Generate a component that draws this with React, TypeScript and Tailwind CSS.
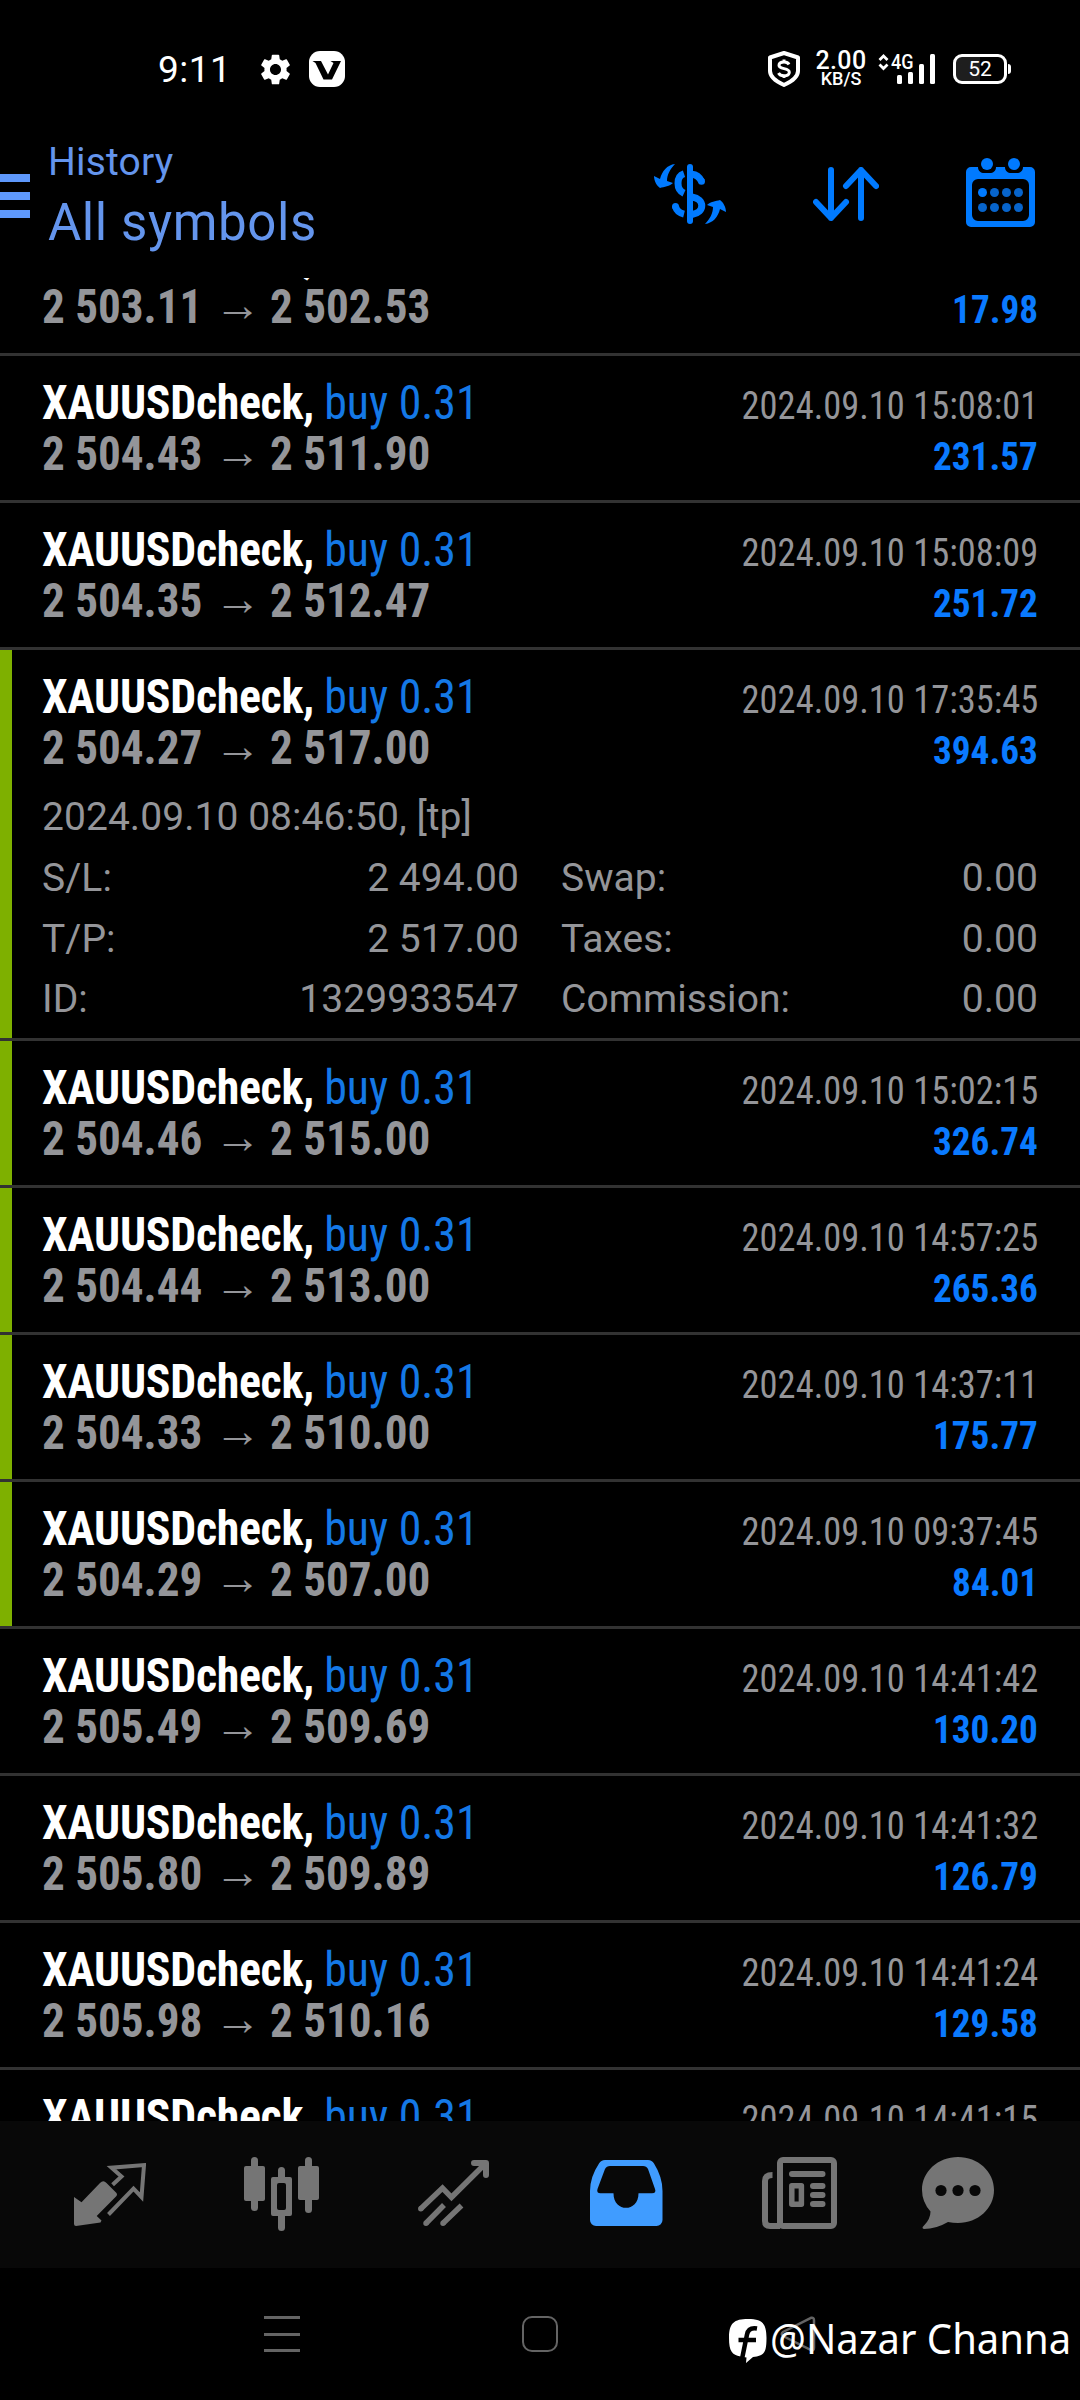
import type { ReactNode } from 'react';
import { MdSettings } from 'react-icons/md';

interface Deal {
  side: 'buy' | 'sell';
  open: string;
  close: string;
  time: string;
  profit: string;
  marked?: boolean;
  details?: DealDetails;
}

interface DealDetails {
  opened: string;
  left: [string, string][];
  right: [string, string][];
}

const DEALS: Deal[] = [
  { side: 'sell', open: '2 503.11', close: '2 502.53', time: '2024.09.10 15:07:52', profit: '17.98' },
  { side: 'buy', open: '2 504.43', close: '2 511.90', time: '2024.09.10 15:08:01', profit: '231.57' },
  { side: 'buy', open: '2 504.35', close: '2 512.47', time: '2024.09.10 15:08:09', profit: '251.72' },
  {
    side: 'buy',
    open: '2 504.27',
    close: '2 517.00',
    time: '2024.09.10 17:35:45',
    profit: '394.63',
    marked: true,
    details: {
      opened: '2024.09.10 08:46:50, [tp]',
      left: [
        ['S/L:', '2 494.00'],
        ['T/P:', '2 517.00'],
        ['ID:', '1329933547'],
      ],
      right: [
        ['Swap:', '0.00'],
        ['Taxes:', '0.00'],
        ['Commission:', '0.00'],
      ],
    },
  },
  { side: 'buy', open: '2 504.46', close: '2 515.00', time: '2024.09.10 15:02:15', profit: '326.74', marked: true },
  { side: 'buy', open: '2 504.44', close: '2 513.00', time: '2024.09.10 14:57:25', profit: '265.36', marked: true },
  { side: 'buy', open: '2 504.33', close: '2 510.00', time: '2024.09.10 14:37:11', profit: '175.77', marked: true },
  { side: 'buy', open: '2 504.29', close: '2 507.00', time: '2024.09.10 09:37:45', profit: '84.01', marked: true },
  { side: 'buy', open: '2 505.49', close: '2 509.69', time: '2024.09.10 14:41:42', profit: '130.20' },
  { side: 'buy', open: '2 505.80', close: '2 509.89', time: '2024.09.10 14:41:32', profit: '126.79' },
  { side: 'buy', open: '2 505.98', close: '2 510.16', time: '2024.09.10 14:41:24', profit: '129.58' },
  { side: 'buy', open: '2 505.61', close: '2 509.80', time: '2024.09.10 14:41:15', profit: '129.89' },
];

const condensed = "font-['Roboto_Condensed',Roboto,sans-serif] [font-stretch:75%]";

export default function App() {
  return (
    <div className="flex h-[2400px] w-[1080px] flex-col overflow-hidden bg-black font-[Roboto,sans-serif]">
      <StatusBar />
      <Header />
      <main className="flex min-h-0 flex-1 flex-col overflow-hidden">
        {/* the first row is scrolled partly under the header */}
        <div className="-mt-[69px]">
          {DEALS.map((deal) => (
            <DealRow key={deal.time} deal={deal} />
          ))}
        </div>
      </main>
      <TabBar />
      <SystemNav />
    </div>
  );
}

function StatusBar() {
  return (
    <div className="flex h-[138px] shrink-0 items-center pl-[158px] text-white">
      <span className="w-[99px] text-[37px] leading-none tracking-[0.5px]">9:11</span>
      <MdSettings className="size-[37px]" />
      <svg className="ml-[15px]" width="36" height="36" viewBox="0 0 36 36">
        <rect width="36" height="36" rx="11" fill="#fff" />
        <path d="M3.500 10h8.500l7 13.500 5.500-11.500-3-2h10.500L23 28.500h-8.500L6.500 12z" fill="#000" />
      </svg>

      <svg className="ml-[423px]" width="32" height="36" viewBox="0 0 32 36" fill="none" stroke="#fff">
        <path d="M16 2 30 6.500V20c0 6-5 10-14 14C7 30 2 26 2 20V6.500z" strokeWidth="4" strokeLinejoin="round" />
        <path
          d="M21 13.500c-1-2-2.500-2.500-5-2.500-3 0-5 1-5 3.200 0 4.800 10.300 2 10.300 7 0 2.300-2 3.500-5.300 3.500-2.800 0-4.500-.7-5.500-2.700M16 8.500v3M16 24v3"
          strokeWidth="3"
        />
      </svg>
      <div className="ml-[14px] flex w-[54px] flex-col items-center font-medium">
        <span className="text-[25px] leading-[19px] tracking-[0.4px]">2.00</span>
        <span className="text-[18px] leading-[17px]">KB/S</span>
      </div>
      <div className="ml-[10px] h-[30px] w-[58px]">
        <svg width="58" height="30" viewBox="0 0 58 30" fill="#fff">
          <path d="M1.500 6 5.500 2l4 4M1.500 10.500l4 4 4-4" fill="none" stroke="#fff" strokeWidth="2.800" />
          <text x="13" y="14.800" fontSize="20.500" fontFamily="Roboto" fontWeight="500" textLength="22.500" lengthAdjust="spacingAndGlyphs">
            4G
          </text>
          <rect x="19" y="21" width="5" height="9" rx="1.500" />
          <rect x="30" y="18" width="5" height="12" rx="1.500" />
          <rect x="41" y="10" width="5" height="20" rx="1.500" />
          <rect x="52" y="0" width="5" height="30" rx="1.500" />
        </svg>
      </div>
      <div className="ml-[17px] flex h-[30px] w-[54px] items-center justify-center rounded-[9px] border-[3px] border-white bg-linear-to-r from-[#1e1e1e] from-50% to-black to-50% text-[21px] leading-none">
        52
      </div>
      <div className="ml-px h-[10px] w-[3px] rounded-r-sm bg-white" />
    </div>
  );
}

function Header() {
  return (
    <header className="flex h-[140px] shrink-0 items-start text-[#6495ed]">
      <div className="mt-[36px] flex w-[30px] flex-col gap-[10px]">
        <div className="h-2 bg-[#5e98fb]" />
        <div className="h-2 bg-[#5e98fb]" />
        <div className="h-2 bg-[#5e98fb]" />
      </div>
      <div className="ml-[18px] flex w-[600px] flex-col">
        <span className="text-[39px] leading-[48px] tracking-[0.2px]">History</span>
        <span className="text-[51px] leading-[74px] tracking-[0.6px]">All symbols</span>
      </div>
      <svg className="mt-[26px] ml-[6px]" width="72" height="60" viewBox="0 0 72 60" fill="none" stroke="#007aff">
        <path d="M36 3v54" strokeWidth="6" strokeLinecap="round" />
        <path d="M30 9.800C22 12.500 22 25.500 30 29.200M38 10.200c4 .3 7.500 3 9.500 7" strokeWidth="7" />
        <path d="M47.500 17.200v.1M21.500 42.500v.1" strokeWidth="7" strokeLinecap="round" />
        <path d="M38 33c13 2 13 15.500 0 17.500M21.500 42.500c1 4 4 6.500 8.500 7.600" strokeWidth="7" />
        <path d="M21 0C13 1 8 7 6 15l-6-3c0 5 3 10 6 12 4-1 10-2 13-5l-6-2c0-6 3-12 8-17z" fill="#007aff" stroke="none" />
        <path d="M51 60c8-1 13-7 15-15l6 3c0-5-3-10-6-12-4 1-10 2-13 5l6 2c0 6-3 12-8 17z" fill="#007aff" stroke="none" />
      </svg>
      <svg
        className="mt-[29px] ml-[87px]"
        width="66"
        height="54"
        viewBox="0 0 66 54"
        fill="none"
        stroke="#007aff"
        strokeWidth="6"
        strokeLinecap="round"
        strokeLinejoin="round"
      >
        <path d="M18 3v48M3 35l15 16 15-16M48 51V3M33 19 48 3l15 16" />
      </svg>
      <svg className="mt-[20px] ml-[87px]" width="69" height="69" viewBox="0 0 69 69" fill="#007aff">
        <path
          fillRule="evenodd"
          d="M5 9h7c0 4 3 6 6 6h6c3 0 6-2 6-6h9c0 4 3 6 6 6h6c3 0 6-2 6-6h7a5 5 0 0 1 5 5v50a5 5 0 0 1-5 5H5a5 5 0 0 1-5-5V14a5 5 0 0 1 5-5zm7 12a6 6 0 0 0-6 6v30a6 6 0 0 0 6 6h45a6 6 0 0 0 6-6V27a6 6 0 0 0-6-6z"
        />
        <circle cx="21" cy="6" r="6" />
        <circle cx="48" cy="6" r="6" />
        <circle cx="16.500" cy="34.500" r="4.500" />
        <g fill="#0764cb">
          <circle cx="28.500" cy="34.500" r="4.500" />
          <circle cx="40.500" cy="34.500" r="4.500" />
          <circle cx="52.500" cy="34.500" r="4.500" />
          <circle cx="16.500" cy="49.500" r="4.500" />
          <circle cx="28.500" cy="49.500" r="4.500" />
          <circle cx="40.500" cy="49.500" r="4.500" />
          <circle cx="52.500" cy="49.500" r="4.500" />
        </g>
      </svg>
    </header>
  );
}

function DealRow({ deal }: { deal: Deal }) {
  return (
    <section className="flex border-b-[3px] border-[#323232]">
      <div className={deal.marked ? 'w-3 bg-[#7eb000]' : 'w-3'} />
      <div className={deal.details ? 'h-[388px] flex-1 pt-[21px] pr-[42px] pl-[30px]' : 'h-[144px] flex-1 pt-[21px] pr-[42px] pl-[30px]'}>
        <div className={`flex h-[51px] items-baseline justify-between leading-[51px] ${condensed}`}>
          <div className="origin-left scale-x-[0.955] text-[48px] whitespace-pre">
            <span className="font-bold tracking-[-0.300px] text-white">XAUUSDcheck, </span>
            <span className={deal.side === 'buy' ? 'text-[#1478e6]' : 'text-[#e64b3c]'}>{deal.side} 0.31</span>
          </div>
          <span className="origin-right scale-x-[0.935] text-[39px] text-[#949599]">{deal.time}</span>
        </div>
        <div className={`flex h-[51px] items-baseline justify-between leading-[51px] font-bold ${condensed}`}>
          <div className="flex items-baseline text-[48px] text-[#949599]">
            <span className="w-[172px] origin-left scale-x-[0.94] whitespace-nowrap">{deal.open}</span>
            <span className="w-[56px] -translate-y-[2px] font-['Liberation_Sans'] text-[47px]">→</span>
            <span className="origin-left scale-x-[0.94]">{deal.close}</span>
          </div>
          <span className="origin-right scale-x-[0.955] text-[39px] text-[#0a7aff]">{deal.profit}</span>
        </div>
        {deal.details ? <Details details={deal.details} /> : null}
      </div>
    </section>
  );
}

function Details({ details }: { details: DealDetails }) {
  return (
    <div className="mt-[14px] text-[39px] leading-[60.800px] tracking-[0.05px] text-[#949599]">
      <p>{details.opened}</p>
      <div className="flex gap-[42px]">
        <DetailColumn rows={details.left} />
        <DetailColumn rows={details.right} />
      </div>
    </div>
  );
}

function DetailColumn({ rows }: { rows: [string, string][] }) {
  return (
    <dl className="flex-1">
      {rows.map(([label, value]) => (
        <div key={label} className="flex justify-between">
          <dt>{label}</dt>
          <dd>{value}</dd>
        </div>
      ))}
    </dl>
  );
}

function Tab({ children, className }: { children: ReactNode; className: string }) {
  return <button className={`flex shrink-0 justify-start text-[#757575] ${className}`}>{children}</button>;
}

function TabBar() {
  return (
    <nav className="flex h-[147px] shrink-0 items-start bg-[#080808] pl-[74px]">
      <Tab className="mt-[42px] w-[170px]">
        <svg width="72" height="63" viewBox="0 0 72 63" fill="currentColor">
          <path d="M0 34 7.500 39.300 26 20q3.300-3.500 6.500 0l9.500 9.500q2 2 0 4L22.700 53l4.800 4.500-1 2L2 63q-2 0-2-2z" />
          <path
            d="M38.600 21.800 47.500 13.500 37.500 4.700 70 2.100 67.500 34 59.500 25.600 34.500 51.500"
            fill="none"
            stroke="currentColor"
            strokeWidth="4"
          />
        </svg>
      </Tab>
      <Tab className="mt-[36px] w-[174px]">
        <svg width="75" height="74" viewBox="0 0 75 74" fill="currentColor">
          <rect x="0" y="9" width="21" height="35" rx="2" />
          <rect x="7" y="0" width="7" height="54" rx="3.500" />
          <rect x="54" y="9" width="21" height="34" rx="2" />
          <rect x="61" y="0" width="7" height="56" rx="3.500" />
          <path
            fillRule="evenodd"
            d="M29 20h5v-6.500a3.500 3.500 0 0 1 7 0V20h5a2 2 0 0 1 2 2v35a2 2 0 0 1-2 2h-5v11.500a3.500 3.500 0 0 1-7 0V59h-5a2 2 0 0 1-2-2V22a2 2 0 0 1 2-2zm6 6a2 2 0 0 0-2 2v23a2 2 0 0 0 2 2h5a2 2 0 0 0 2-2V28a2 2 0 0 0-2-2z"
          />
        </svg>
      </Tab>
      <Tab className="mt-[39px] w-[172px]">
        <svg width="71" height="66" viewBox="0 0 71 66" fill="none" stroke="currentColor" strokeWidth="5.500">
          <path d="M2.800 48.700 24.500 28 33.500 37.300 67 4" />
          <path d="M56 3h12v12" strokeWidth="6" strokeLinecap="round" strokeLinejoin="round" />
          <path d="M26 45 8 63.200M43.500 45.500 25 63.200" />
          <path d="M2.800 48.700h.01M8 63.200h.01M25 63.200h.01" strokeLinecap="round" />
        </svg>
      </Tab>
      <Tab className="mt-[39px] w-[172px]">
        <svg width="73" height="66" viewBox="0 0 73 66" fill="#409cff">
          <path
            fillRule="evenodd"
            d="M15 0h43q4 0 6 3.500Q72.500 17 72.500 31v29a6 6 0 0 1-6 6H6a6 6 0 0 1-6-6V31Q0 17 9 3.500 11 0 15 0zM20 6q-3.500 0-5 3L7.500 29q-1.200 4.200 3 4.200H23.500c0 19.500 25 19.500 25 0H62q4.500 0 3-4.200L58 9q-1.500-3-5-3z"
          />
        </svg>
      </Tab>
      <Tab className="mt-[36px] w-[160px]">
        <svg width="75" height="72" viewBox="0 0 75 72" fill="none" stroke="currentColor" strokeWidth="6">
          <rect x="18" y="3" width="54" height="66" rx="3" />
          <path d="M10.500 18Q3 18 3 24v40q0 5 5 5h10" />
          <path d="M30 17h30.500M51 29h9.500M51 38h9.500M51 47h9.500" strokeLinecap="round" />
          <rect x="29.800" y="28.800" width="9.600" height="18.400" strokeWidth="5.500" strokeLinejoin="round" />
        </svg>
      </Tab>
      <Tab className="mt-[36px] w-[72px]">
        <svg width="72" height="72" viewBox="0 0 72 72" fill="currentColor">
          <path d="M36 0c20 0 36 14.500 36 33S56 66 36 66q-5 0-10-1Q14 72 2 72q-3-1 0-3.500Q8.500 62 8.500 54.500 0 45 0 33C0 14.500 16 0 36 0z" />
          <g fill="#080808">
            <circle cx="19" cy="33.500" r="5.600" />
            <circle cx="36" cy="33.500" r="5.600" />
            <circle cx="53" cy="33.500" r="5.600" />
          </g>
        </svg>
      </Tab>
    </nav>
  );
}

function SystemNav() {
  return (
    <div className="relative flex h-[132px] shrink-0 items-start pt-[48px] pl-[264px]">
      <div className="flex w-[36px] flex-col gap-[13.500px]">
        <div className="h-[3px] bg-[#646464]" />
        <div className="h-[3px] bg-[#646464]" />
        <div className="h-[3px] bg-[#646464]" />
      </div>
      <div className="ml-[222px] size-[36px] rounded-[10px] border-[2.500px] border-[#646464]" />
      <svg className="ml-[222px]" width="36" height="36" viewBox="0 0 36 36" fill="none" stroke="#646464" strokeWidth="2.500">
        <path d="M31 1.800 3 16q-2.500 2 0 4L31 34.200q3 .8 3-2.500V4.500q0-3.500-3-2.700z" />
      </svg>
      {/* author signature laid over the system buttons */}
      <div className="absolute top-[42px] left-[729px] flex items-center text-white">
        <svg className="mt-[6px]" width="38" height="44" viewBox="0 0 38 44">
          <path d="M19 0C33 0 37.500 4 37.500 19S35 37 24 38l-7 6 .5-5.500-6-1C3 36 0 32 0 19 0 4 5 0 19 0z" fill="#fff" />
          <path d="M28 9.500c-6-1-9 1-10 6L13 40M9.500 21h17.500" fill="none" stroke="#000" strokeWidth="4.500" />
        </svg>
        <span className="ml-[3px] origin-left scale-x-[0.975] font-['Noto_Sans',sans-serif] text-[41px] leading-[56px] whitespace-nowrap">
          @Nazar Channa
        </span>
      </div>
    </div>
  );
}
